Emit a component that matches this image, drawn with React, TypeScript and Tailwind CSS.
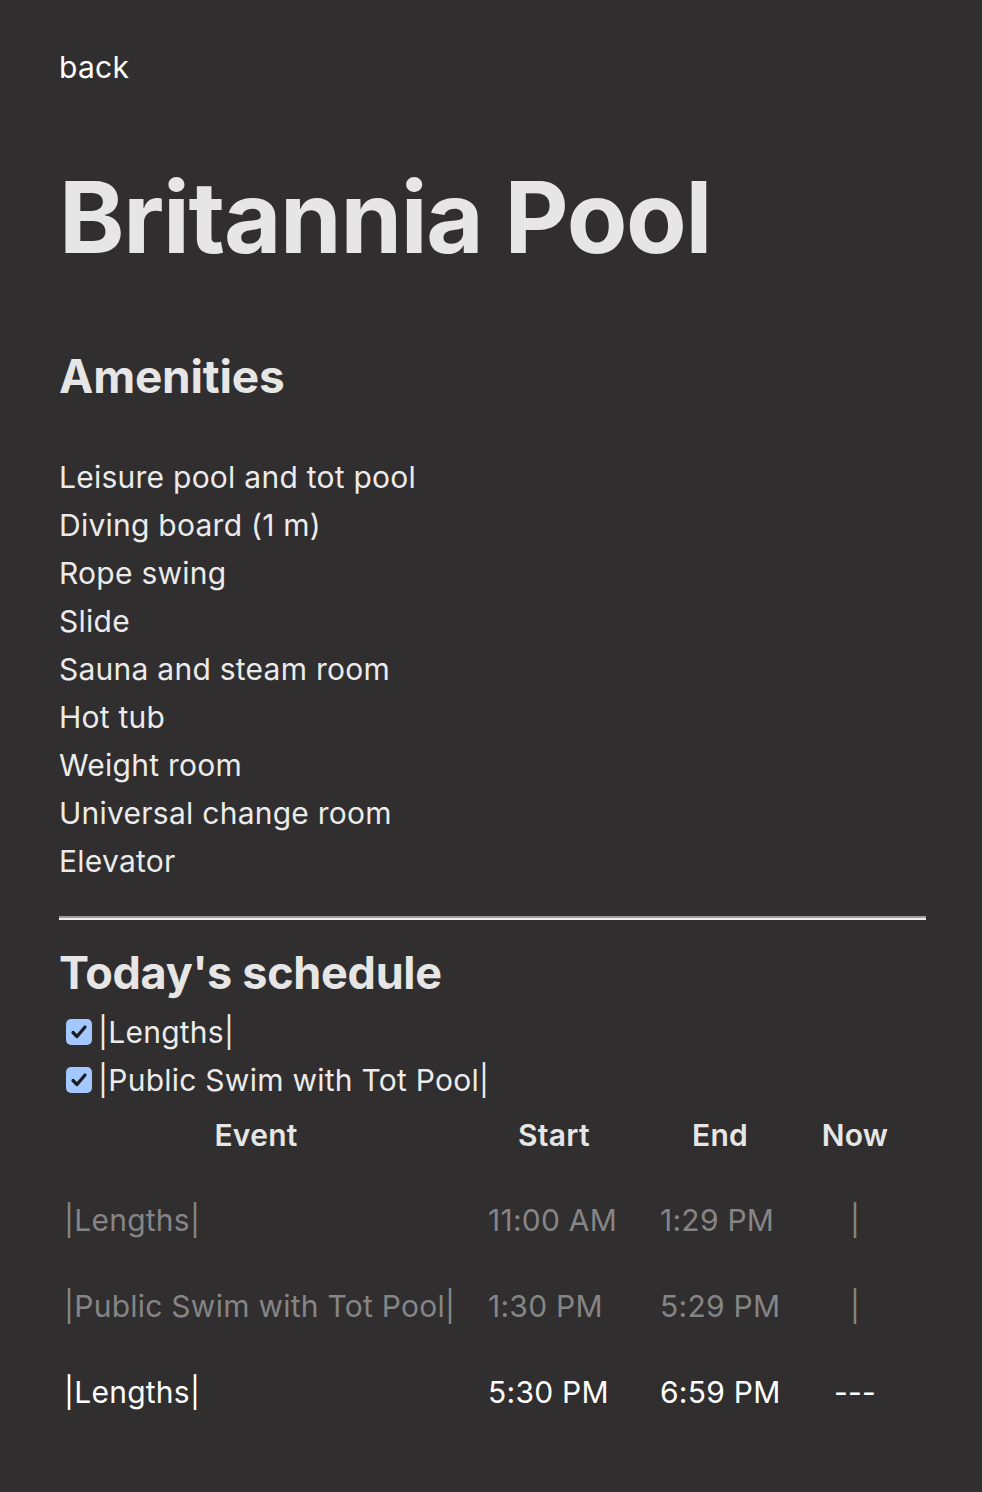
const amenities = [
  "Leisure pool and tot pool",
  "Diving board (1 m)",
  "Rope swing",
  "Slide",
  "Sauna and steam room",
  "Hot tub",
  "Weight room",
  "Universal change room",
  "Elevator",
];

const filters = ["|Lengths|", "|Public Swim with Tot Pool|"];

const rows = [
  { event: "|Lengths|", start: "11:00 AM", end: "1:29 PM", now: "|", past: true },
  { event: "|Public Swim with Tot Pool|", start: "1:30 PM", end: "5:29 PM", now: "|", past: true },
  { event: "|Lengths|", start: "5:30 PM", end: "6:59 PM", now: "---", past: false },
];

const Check = () => (
  <span className="w-[26px] h-[26px] rounded-[5px] bg-[#a3c7ff] flex items-center justify-center shrink-0 ml-[7px] mr-[6px]">
    <svg width="20" height="20" viewBox="0 0 20 20" fill="none">
      <path d="M4 10.5 L8 14.5 L16 5" stroke="#1c1c1e" strokeWidth="3.2" strokeLinecap="round" strokeLinejoin="round" />
    </svg>
  </span>
);

export default function App() {
  return (
    <div className="min-h-screen bg-[#302e2f] text-[#f2f2f2] px-[59px] pt-[43px] pb-[40px] font-['Inter','Liberation_Sans',sans-serif] tracking-[0.25px]">
      <a className="block text-[30px] leading-[48px] text-white w-fit">back</a>

      <h1 className="mt-[76px] text-[99px] leading-[100px] font-bold text-[#e6e6e6] tracking-[-1.3px]">Britannia Pool</h1>

      <h2 className="mt-[81px] text-[46px] leading-[56px] font-bold text-[#e6e6e6] tracking-[-0.2px]">Amenities</h2>

      <ul className="mt-[49px]">
        {amenities.map((a) => (
          <li key={a} className="text-[30px] leading-[48px] text-[#ebebeb]">{a}</li>
        ))}
      </ul>

      <hr className="mt-[31px] w-[867px] h-0 border-t-2 border-b-2 border-t-[#9c9c9c] border-b-[#ededed]" />

      <h2 className="mt-[25px] text-[45px] leading-[56px] font-bold text-[#e6e6e6] tracking-[-0.3px]">Today's schedule</h2>

      <div className="mt-[7px]">
        {filters.map((f) => (
          <label key={f} className="flex items-center text-[30px] leading-[48px] text-[#ebebeb]">
            <Check />
            {f}
          </label>
        ))}
      </div>

      <table className="table-fixed border-collapse w-[851px] text-[30px]">
        <colgroup>
          <col className="w-[409px]" />
          <col className="w-[172px]" />
          <col className="w-[160px]" />
          <col className="w-[110px]" />
        </colgroup>
        <thead>
          <tr className="text-[#e6e6e6] leading-[48px]">
            <th className="pl-[5px] pr-[20px] pt-[7px] pb-[18px] text-center font-semibold">Event</th>
            <th className="px-[20px] pt-[7px] pb-[18px] text-center font-semibold">Start</th>
            <th className="px-[20px] pt-[7px] pb-[18px] text-center font-semibold">End</th>
            <th className="pt-[7px] pb-[18px] text-center font-semibold">Now</th>
          </tr>
        </thead>
        <tbody>
          {rows.map((r, i) => (
            <tr key={i} className={r.past ? "h-[86px] text-[#858585]" : "h-[86px] text-white"}>
              <td className="pl-[5px] pr-[20px] align-middle whitespace-nowrap">{r.event}</td>
              <td className="px-[20px] align-middle whitespace-nowrap">{r.start}</td>
              <td className="px-[20px] align-middle whitespace-nowrap">{r.end}</td>
              <td className="text-center align-middle">{r.now}</td>
            </tr>
          ))}
        </tbody>
      </table>
    </div>
  );
}
